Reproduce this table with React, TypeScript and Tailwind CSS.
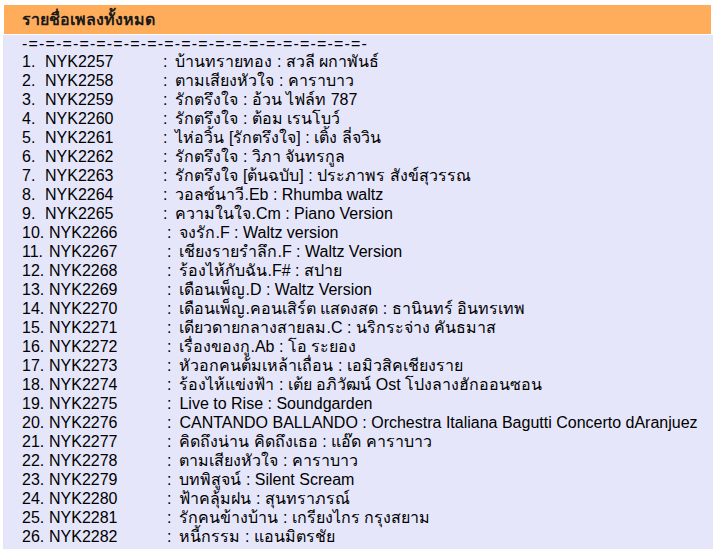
import React from "react";

const songs: [string, string][] = [
  ["NYK2257", "บ้านทรายทอง : สวลี ผกาพันธ์"],
  ["NYK2258", "ตามเสียงหัวใจ : คาราบาว"],
  ["NYK2259", "รักตรึงใจ : อ้วน ไฟล์ท 787"],
  ["NYK2260", "รักตรึงใจ : ต้อม เรนโบว์"],
  ["NYK2261", "ไห่อวิ้น [รักตรึงใจ] : เติ้ง ลี่จวิน"],
  ["NYK2262", "รักตรึงใจ : วิภา จันทรกูล"],
  ["NYK2263", "รักตรึงใจ [ต้นฉบับ] : ประภาพร สังข์สุวรรณ"],
  ["NYK2264", "วอลซ์นาวี.Eb : Rhumba waltz"],
  ["NYK2265", "ความในใจ.Cm : Piano Version"],
  ["NYK2266", "จงรัก.F : Waltz version"],
  ["NYK2267", "เชียงรายรำลึก.F : Waltz Version"],
  ["NYK2268", "ร้องไห้กับฉัน.F# : สปาย"],
  ["NYK2269", "เดือนเพ็ญ.D : Waltz Version"],
  ["NYK2270", "เดือนเพ็ญ.คอนเสิร์ต แสดงสด : ธานินทร์ อินทรเทพ"],
  ["NYK2271", "เดียวดายกลางสายลม.C : นริกระจ่าง คันธมาส"],
  ["NYK2272", "เรื่องของกู.Ab : โอ ระยอง"],
  ["NYK2273", "หัวอกคนต้มเหล้าเถื่อน : เอมิวสิคเชียงราย"],
  ["NYK2274", "ร้องไห้แข่งฟ้า : เต้ย อภิวัฒน์ Ost โปงลางฮักออนซอน"],
  ["NYK2275", "Live to Rise : Soundgarden"],
  ["NYK2276", "CANTANDO BALLANDO : Orchestra Italiana Bagutti Concerto dAranjuez"],
  ["NYK2277", "คิดถึงน่าน คิดถึงเธอ : แอ๊ด คาราบาว"],
  ["NYK2278", "ตามเสียงหัวใจ : คาราบาว"],
  ["NYK2279", "บทพิสูจน์ : Silent Scream"],
  ["NYK2280", "ฟ้าคลุ้มฝน : สุนทราภรณ์"],
  ["NYK2281", "รักคนข้างบ้าน : เกรียงไกร กรุงสยาม"],
  ["NYK2282", "หนี้กรรม : แอนมิตรชัย"],
];

const font = { fontFamily: "Tahoma, 'Liberation Sans', 'Noto Sans', sans-serif" };

export default function App() {
  return (
    <div className="w-[717px] h-[557px] bg-white pt-[5px] pl-[3px] text-black" style={font}>
      {/* หัวตาราง */}
      <div className="ml-[1px] w-[707px] h-[29px] bg-[#ffad5b] pl-[18px] flex items-center text-[16px] font-bold text-[#1a1a1a]">
        รายชื่อเพลงทั้งหมด
      </div>
      <div className="mt-[1px] w-[710px] h-[514px] bg-[#e6e6fa] pl-[19px] text-[16px]">
        <div className="h-[17px] leading-[17px] whitespace-pre tracking-[1.15px]">-=-=-=-=-=-=-=-=-=-=-=-=-=-=-=-=-=-=-=-=-</div>
        {songs.map(([code, title], i) => (
          <div key={code} className="h-[19px] leading-[19px] flex whitespace-nowrap">
            <span className={i < 9 ? "w-[23px] shrink-0" : "w-[27px] shrink-0"}>{i + 1}.</span>
            <span className={i < 9 ? "w-[118px] shrink-0" : "w-[118px] shrink-0"}>{code}</span>
            <span>:</span>
            <span className="ml-[8px]">{title}</span>
          </div>
        ))}
      </div>
    </div>
  );
}
